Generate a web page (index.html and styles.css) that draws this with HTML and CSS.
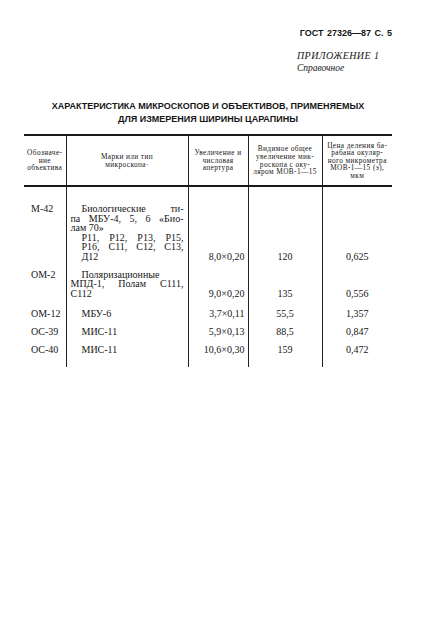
FILE: index.html
```html
<!DOCTYPE html>
<html lang="ru">
<head>
<meta charset="utf-8">
<title>ГОСТ 27326—87 С. 5</title>
<link rel="stylesheet" href="styles.css">
</head>
<body>
<div class="page">
  <div class="top">
    <div class="gost">ГОСТ 27326—87 С. 5</div>
  </div>
  <div class="appendix">
    <div class="app-title">ПРИЛОЖЕНИЕ 1</div>
    <div class="app-sub">Справочное</div>
  </div>
  <h1 class="title">ХАРАКТЕРИСТИКА МИКРОСКОПОВ И ОБЪЕКТИВОВ, ПРИМЕНЯЕМЫХ<br>ДЛЯ ИЗМЕРЕНИЯ ШИРИНЫ ЦАРАПИНЫ</h1>
  <table class="tbl">
    <colgroup>
      <col class="c1"><col class="c2"><col class="c3"><col class="c4"><col class="c5">
    </colgroup>
    <thead>
      <tr>
        <th>Обозначе-<br>ние<br>объектива</th>
        <th>Марки или тип<br>микроскопа·</th>
        <th>Увеличение и<br>числовая<br>апертура</th>
        <th>Видимое общее<br>увеличение мик-<br>роскопа с оку-<br>ляром МОВ-1—15</th>
        <th>Цена деления ба-<br>рабана окуляр-<br>ного микрометра<br>МОВ-1—15 (э),<br>мкм</th>
      </tr>
    </thead>
    <tbody>
      <tr class="first">
        <td class="code">М-42</td>
        <td class="mark">
          <div class="j ind">Биологические ти-</div>
          <div class="j">па МБУ-4, 5, 6 «Био-</div>
          <div class="l">лам 70»</div>
          <div class="j ind">Р11, Р12, Р13, Р15,</div>
          <div class="j ind">Р16, С11, С12, С13,</div>
          <div class="l ind">Д12</div>
        </td>
        <td class="mag">8,0×0,20</td>
        <td class="val">120</td>
        <td class="val">0,625</td>
      </tr>
      <tr>
        <td class="code">ОМ-2</td>
        <td class="mark">
          <div class="l ind">Поляризационные</div>
          <div class="j">МПД-1, Полам С111,</div>
          <div class="l">С112</div>
        </td>
        <td class="mag">9,0×0,20</td>
        <td class="val">135</td>
        <td class="val">0,556</td>
      </tr>
      <tr class="sp">
        <td class="code">ОМ-12</td>
        <td class="mark"><div class="l ind">МБУ-6</div></td>
        <td class="mag">3,7×0,11</td>
        <td class="val">55,5</td>
        <td class="val">1,357</td>
      </tr>
      <tr>
        <td class="code">ОС-39</td>
        <td class="mark"><div class="l ind">МИС-11</div></td>
        <td class="mag">5,9×0,13</td>
        <td class="val">88,5</td>
        <td class="val">0,847</td>
      </tr>
      <tr class="last">
        <td class="code">ОС-40</td>
        <td class="mark"><div class="l ind">МИС-11</div></td>
        <td class="mag">10,6×0,30</td>
        <td class="val">159</td>
        <td class="val">0,472</td>
      </tr>
    </tbody>
  </table>
</div>
</body>
</html>
```
FILE: styles.css
```css
html, body {
  margin: 0;
  padding: 0;
  background: #ffffff;
}
body {
  color: #161616;
  font-family: "Liberation Serif", "DejaVu Serif", serif;
}
.page {
  width: 368px;
  padding: 28px 0 0 24px;
}
.top {
  display: flex;
  justify-content: flex-end;
}
.gost {
  font-family: "Liberation Sans", "DejaVu Sans", sans-serif;
  font-weight: bold;
  font-size: 9px;
  line-height: 10px;
  word-spacing: 1px;
}
.appendix {
  margin: 12px 0 0 273px;
  font-style: italic;
}
.app-title {
  font-size: 10px;
  line-height: 12px;
  letter-spacing: 0.4px;
}
.app-sub {
  font-size: 9.5px;
  line-height: 12px;
}
.title {
  margin: 26px 0 0 0;
  text-align: center;
  font-family: "Liberation Sans", "DejaVu Sans", sans-serif;
  font-weight: bold;
  font-size: 9px;
  line-height: 13px;
}
.tbl {
  margin-top: 8px;
  width: 368px;
  border-collapse: collapse;
  table-layout: fixed;
}
.c1 { width: 42px; }
.c2 { width: 122px; }
.c3 { width: 60px; }
.c4 { width: 74px; }
.c5 { width: 70px; }
.tbl th {
  border-top: 2px solid #1a1a1a;
  border-bottom: 2px solid #1a1a1a;
  border-left: 1px solid #222;
  font-weight: normal;
  font-size: 7.3px;
  line-height: 7.6px;
  letter-spacing: 0.4px;
  height: 49px;
  padding: 0 1px;
  text-align: center;
  vertical-align: middle;
}
.tbl th:first-child,
.tbl td:first-child {
  border-left: none;
}
.tbl td {
  border-left: 1px solid #222;
  font-size: 10px;
  line-height: 9.5px;
  padding: 8.5px 4px 0 4px;
}
.tbl tr.first td { padding-top: 17px; }
.tbl tr.sp td { padding-top: 10.5px; }
.tbl tr.last td { padding-bottom: 13px; }
.tbl td.code {
  vertical-align: top;
  padding-left: 7px;
  padding-right: 0;
}
.tbl td.mark { vertical-align: top; }
.tbl td.mag {
  vertical-align: bottom;
  text-align: right;
  padding-right: 3px;
  padding-left: 0;
  white-space: nowrap;
}
.tbl td.val {
  vertical-align: bottom;
  text-align: center;
}
.j {
  text-align: justify;
  text-align-last: justify;
}
.l { text-align: left; }
.ind { padding-left: 11px; }
.tbl tr.last td.mag,
.tbl tr.last td.val { vertical-align: top; }
```
